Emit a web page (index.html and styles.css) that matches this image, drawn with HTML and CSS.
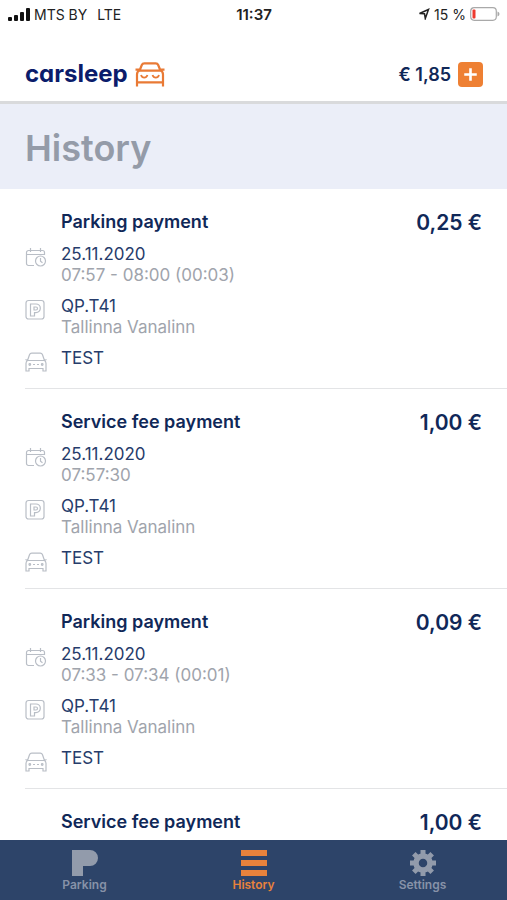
FILE: index.html
```html
<!DOCTYPE html>
<html lang="en">
<head>
<meta charset="utf-8">
<meta name="viewport" content="width=device-width, initial-scale=1">
<title>Carsleep – History</title>
<link rel="stylesheet" href="styles.css">
</head>
<body>
<svg class="sprite" aria-hidden="true">
  <symbol id="calendar" viewBox="0 0 22 22">
    <path d="M9 18.500H3.500a2 2 0 0 1-2-2v-11a2 2 0 0 1 2-2h14a2 2 0 0 1 2 2V8M1.500 7.500h18M5.500 1v4M15.500 1v4"/>
    <circle cx="15.500" cy="14" r="5"/><path d="M15.500 11v3.200l2 1.600"/>
  </symbol>
  <symbol id="zone" viewBox="0 0 22 22">
    <rect x="1" y="1.500" width="18" height="18.500" rx="2.500"/>
    <path d="M5.500 5h5.500a4.300 4.300 0 0 1 0 8.600H9.500v3.400h-4zM9 8h2a1.500 1.500 0 0 1 0 3H9z"/>
  </symbol>
  <symbol id="car" viewBox="0 0 22 22">
    <path d="M2.500 9.500l2-5.700q.6-1.600 2.200-1.600h8.600q1.600 0 2.200 1.600l2 5.700M.5 8.500l2 1h17l2-1M2.500 9.500Q1 10.500 1 12.500v7.500h3v-2.500h14v2.500h3v-7.500q0-2-1.500-3M8 13.500h2M12 13.500h2"/>
    <circle cx="4.800" cy="13.500" r=".8"/><circle cx="17.200" cy="13.500" r=".8"/>
  </symbol>
</svg>

<div class="status">
  <div class="status-side">
    <svg class="signal" viewBox="0 0 22 13" aria-hidden="true"><rect x="0" y="9" width="4" height="4" rx="1"/><rect x="6" y="7" width="4" height="6" rx="1"/><rect x="12" y="4" width="4" height="9" rx="1"/><rect x="18" y="0" width="4" height="13" rx="1"/></svg>
    <span>MTS BY</span><span class="network">LTE</span>
  </div>
  <span class="clock">11:37</span>
  <div class="status-side status-end">
    <svg class="locate" viewBox="0 0 12 12" aria-hidden="true"><path d="M1.500 5.500L10.500 1.500 7.300 10.500 6.500 5.800z"/></svg>
    <span>15 %</span>
    <svg class="battery" viewBox="0 0 30 14" aria-hidden="true"><rect x=".7" y=".7" width="25.600" height="12.600" rx="3.500" fill="#fff" stroke="#a9a9a9" stroke-width="1.200"/><rect x="2.500" y="2.500" width="3" height="9" rx="1" fill="#ee3b30"/><path d="M27.500 4.500q2 .8 2 2.500t-2 2.500z" fill="#a9a9a9"/></svg>
  </div>
</div>

<header class="header">
  <a class="logo" href="#" aria-label="carsleep">
    <span>carsleep</span>
    <svg viewBox="0 0 30 25" aria-hidden="true"><path d="M4.800 8l2-5q.7-1.700 2.500-1.700h11.400q1.800 0 2.500 1.700l2 5M.5 7.700h4.300M25.200 7.700h4.300M3.500 8.700h23M2 24.500V12.500q0-3 2.500-4M28 24.500V12.500q0-3-2.500-4M2 20.300h26" fill="none" stroke="#e97a35" stroke-width="2.200"/><path d="M6 13q1 2.700 3.200 2.700T12.500 13M17.500 13q1 2.700 3.300 2.700T24 13" fill="none" stroke="#e97a35" stroke-width="1.800"/></svg>
  </a>
  <div class="balance">
    <span>€ 1,85</span>
    <button type="button" aria-label="Add funds"><svg viewBox="0 0 24 24" aria-hidden="true"><path d="M12 6v12M6 12h12" stroke="#fff" stroke-width="2.500"/></svg></button>
  </div>
</header>

<h1 class="title">History</h1>

<main class="list">
  <article class="item">
    <h2>Parking payment</h2><strong>0,25 €</strong>
    <div class="row"><svg><use href="#calendar"/></svg><p>25.11.2020<small>07:57 - 08:00 (00:03)</small></p></div>
    <div class="row"><svg><use href="#zone"/></svg><p>QP.T41<small>Tallinna Vanalinn</small></p></div>
    <div class="row"><svg><use href="#car"/></svg><p>TEST</p></div>
  </article>
  <article class="item">
    <h2>Service fee payment</h2><strong>1,00 €</strong>
    <div class="row"><svg><use href="#calendar"/></svg><p>25.11.2020<small>07:57:30</small></p></div>
    <div class="row"><svg><use href="#zone"/></svg><p>QP.T41<small>Tallinna Vanalinn</small></p></div>
    <div class="row"><svg><use href="#car"/></svg><p>TEST</p></div>
  </article>
  <article class="item">
    <h2>Parking payment</h2><strong>0,09 €</strong>
    <div class="row"><svg><use href="#calendar"/></svg><p>25.11.2020<small>07:33 - 07:34 (00:01)</small></p></div>
    <div class="row"><svg><use href="#zone"/></svg><p>QP.T41<small>Tallinna Vanalinn</small></p></div>
    <div class="row"><svg><use href="#car"/></svg><p>TEST</p></div>
  </article>
  <article class="item">
    <h2>Service fee payment</h2><strong>1,00 €</strong>
  </article>
</main>

<nav class="tabs">
  <a href="#"><svg viewBox="0 0 26 26" aria-hidden="true"><path d="M0 0h18a8 8 0 0 1 0 16H11v10H0z"/></svg>Parking</a>
  <a href="#" class="active" aria-current="page"><svg viewBox="0 0 26 26" aria-hidden="true"><path d="M0 0h26v6H0zM0 10h26v6H0zM0 20h26v6H0z"/></svg>History</a>
  <a href="#"><svg viewBox="0 0 26 26" aria-hidden="true"><circle cx="13" cy="13" r="7" fill="none" stroke="#929bab" stroke-width="5.500"/><path id="tooth" d="M10.500 0h5v5h-5zM10.500 21h5v5h-5zM0 10.500h5v5H0zM21 10.500h5v5h-5z"/><use href="#tooth" transform="rotate(45 13 13)"/></svg>Settings</a>
</nav>
</body>
</html>
```
FILE: styles.css
```css
* { box-sizing: border-box; }
body {
  margin: 0;
  height: 100vh;
  display: flex;
  flex-direction: column;
  overflow: hidden;
  background: #fff;
  color: #102858;
  font-family: Inter, "Liberation Sans", sans-serif;
}
h1, h2, p { margin: 0; }
a { color: inherit; text-decoration: none; }
svg { flex: none; display: block; }
.sprite { position: absolute; width: 0; height: 0; }

.status {
  flex: none;
  display: grid;
  grid-template-columns: 1fr auto 1fr;
  align-items: center;
  height: 28px;
  padding: 0 7px 0 8px;
  color: #222;
  font-size: 14px;
}
.status-side { display: flex; align-items: center; gap: 4px; }
.status-end { justify-content: flex-end; }
.network { margin-left: 6px; }
.clock { font-size: 15px; font-weight: 600; }
.signal { width: 22px; height: 13px; fill: #111; }
.locate { width: 12px; height: 12px; fill: none; stroke: #222; stroke-width: 1.5; }
.battery { width: 30px; height: 14px; }

.header {
  flex: none;
  display: flex;
  align-items: center;
  justify-content: space-between;
  height: 76px;
  padding: 19px 24px 0 25px;
  border-bottom: 3px solid #d9dadc;
}
.logo {
  display: flex;
  align-items: center;
  gap: 7px;
  color: #0b1c6b;
  font-size: 24px;
  font-weight: 700;
  font-feature-settings: "cv11";
  line-height: 28px;
}
.logo svg { width: 30px; height: 25px; }
.balance { display: flex; align-items: center; gap: 7px; font-size: 18px; font-weight: 600; }
.balance button {
  width: 25px;
  height: 25px;
  padding: 0;
  border: 0;
  border-radius: 4px;
  background: #ee8033;
}

.title {
  flex: none;
  padding: 24px 25px 21px;
  background: #ebeef8;
  color: #949ba8;
  font-size: 36px;
  font-weight: 600;
  line-height: 40px;
}

.list { flex: 1; min-height: 0; overflow: hidden; }
.item {
  display: grid;
  grid-template-columns: 1fr auto;
  row-gap: 10px;
  margin-left: 25px;
  padding: 20px 25px 15px 0;
  border-bottom: 1px solid #e3e4e6;
}
.item:last-child { padding-bottom: 0; border: 0; }
.item h2 { padding-left: 36px; font-size: 18px; font-weight: 600; line-height: 25px; }
.item strong { font-size: 21px; font-weight: 600; line-height: 27px; }
.item h2, .item strong { height: 25px; }
.row {
  grid-column: 1 / -1;
  display: flex;
  gap: 14px;
  color: #263c6b;
  font-size: 17px;
  line-height: 21px;
}
.row svg { width: 22px; height: 22px; margin-top: 3px; fill: none; stroke: #b9bec6; stroke-width: 1.2; }
.row small { display: block; color: #a0a4ac; font-size: 17px; }

.tabs {
  flex: none;
  display: grid;
  grid-template-columns: repeat(3, 1fr);
  height: 60px;
  padding-top: 10px;
  background: #2d4469;
  color: #8792a8;
  fill: #929bab;
  font-size: 12px;
  font-weight: 600;
  line-height: 18px;
}
.tabs a { display: flex; flex-direction: column; align-items: center; }
.tabs svg { width: 26px; height: 26px; }
.tabs .active { color: #e7823c; fill: #e7823c; }
```
